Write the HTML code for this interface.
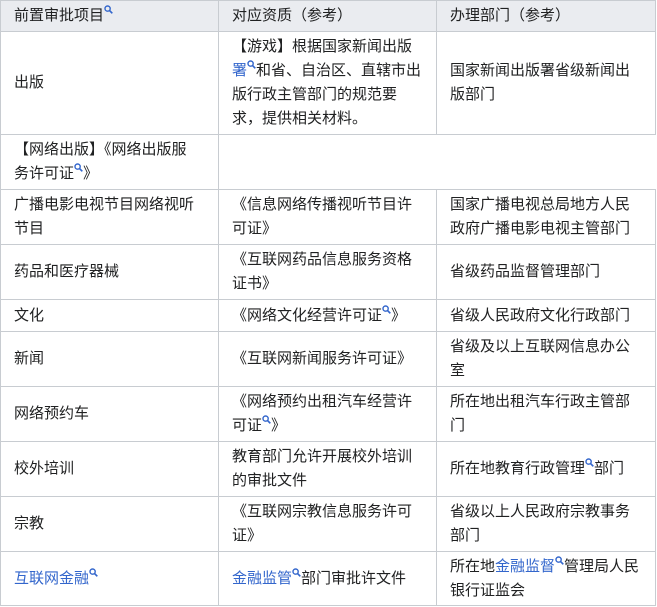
<!DOCTYPE html>
<html><head><meta charset="utf-8"><style>
body{margin:0;background:#fff;font-family:"Liberation Sans","Noto Sans CJK SC",sans-serif;font-size:15px;color:#202122;}
table{border-collapse:collapse;position:absolute;left:0;top:0;table-layout:fixed;}
td,th{border:1px solid #c8ccd1;padding:0 12px 0 13px;line-height:24px;text-align:left;vertical-align:middle;font-weight:normal;}
th{background:#eaecf0;}
a{color:#3366cc;text-decoration:none;}
.q{display:inline-block;vertical-align:top;margin-top:1px;}
</style></head><body>
<table>
<colgroup><col style="width:218px"><col style="width:218px"><col style="width:219px"></colgroup>
<tr style="height:31px"><th>前置审批项目<svg class="q" width="9" height="9" viewBox="0 0 9 9"><circle cx="3.6" cy="3.6" r="2.6" fill="none" stroke="#36c" stroke-width="1.4"/><path d="M5.5 5.5L8.3 8.3" stroke="#36c" stroke-width="1.6"/></svg></th><th>对应资质（参考）</th><th>办理部门（参考）</th></tr>
<tr style="height:103px"><td>出版</td><td>【游戏】根据国家新闻出版<br><a>署</a><svg class="q" width="9" height="9" viewBox="0 0 9 9"><circle cx="3.6" cy="3.6" r="2.6" fill="none" stroke="#36c" stroke-width="1.4"/><path d="M5.5 5.5L8.3 8.3" stroke="#36c" stroke-width="1.6"/></svg>和省、自治区、直辖市出<br>版行政主管部门的规范要<br>求，提供相关材料。</td><td>国家新闻出版署省级新闻出<br>版部门</td></tr>
<tr style="height:55px"><td>【网络出版】《网络出版服<br>务许可证<svg class="q" width="9" height="9" viewBox="0 0 9 9"><circle cx="3.6" cy="3.6" r="2.6" fill="none" stroke="#36c" stroke-width="1.4"/><path d="M5.5 5.5L8.3 8.3" stroke="#36c" stroke-width="1.6"/></svg>》</td><td colspan="2" style="border-right:none"></td></tr>
<tr style="height:55px"><td>广播电影电视节目网络视听<br>节目</td><td>《信息网络传播视听节目许<br>可证》</td><td>国家广播电视总局地方人民<br>政府广播电影电视主管部门</td></tr>
<tr style="height:55px"><td>药品和医疗器械</td><td>《互联网药品信息服务资格<br>证书》</td><td>省级药品监督管理部门</td></tr>
<tr style="height:32px"><td>文化</td><td>《网络文化经营许可证<svg class="q" width="9" height="9" viewBox="0 0 9 9"><circle cx="3.6" cy="3.6" r="2.6" fill="none" stroke="#36c" stroke-width="1.4"/><path d="M5.5 5.5L8.3 8.3" stroke="#36c" stroke-width="1.6"/></svg>》</td><td>省级人民政府文化行政部门</td></tr>
<tr style="height:55px"><td>新闻</td><td>《互联网新闻服务许可证》</td><td>省级及以上互联网信息办公<br>室</td></tr>
<tr style="height:55px"><td>网络预约车</td><td>《网络预约出租汽车经营许<br>可证<svg class="q" width="9" height="9" viewBox="0 0 9 9"><circle cx="3.6" cy="3.6" r="2.6" fill="none" stroke="#36c" stroke-width="1.4"/><path d="M5.5 5.5L8.3 8.3" stroke="#36c" stroke-width="1.6"/></svg>》</td><td>所在地出租汽车行政主管部<br>门</td></tr>
<tr style="height:55px"><td>校外培训</td><td>教育部门允许开展校外培训<br>的审批文件</td><td>所在地教育行政管理<svg class="q" width="9" height="9" viewBox="0 0 9 9"><circle cx="3.6" cy="3.6" r="2.6" fill="none" stroke="#36c" stroke-width="1.4"/><path d="M5.5 5.5L8.3 8.3" stroke="#36c" stroke-width="1.6"/></svg>部门</td></tr>
<tr style="height:55px"><td>宗教</td><td>《互联网宗教信息服务许可<br>证》</td><td>省级以上人民政府宗教事务<br>部门</td></tr>
<tr style="height:54px"><td><a>互联网金融</a><svg class="q" width="9" height="9" viewBox="0 0 9 9"><circle cx="3.6" cy="3.6" r="2.6" fill="none" stroke="#36c" stroke-width="1.4"/><path d="M5.5 5.5L8.3 8.3" stroke="#36c" stroke-width="1.6"/></svg></td><td><a>金融监管</a><svg class="q" width="9" height="9" viewBox="0 0 9 9"><circle cx="3.6" cy="3.6" r="2.6" fill="none" stroke="#36c" stroke-width="1.4"/><path d="M5.5 5.5L8.3 8.3" stroke="#36c" stroke-width="1.6"/></svg>部门审批许文件</td><td>所在地<a>金融监督</a><svg class="q" width="9" height="9" viewBox="0 0 9 9"><circle cx="3.6" cy="3.6" r="2.6" fill="none" stroke="#36c" stroke-width="1.4"/><path d="M5.5 5.5L8.3 8.3" stroke="#36c" stroke-width="1.6"/></svg>管理局人民<br>银行证监会</td></tr>
</table>
</body></html>
